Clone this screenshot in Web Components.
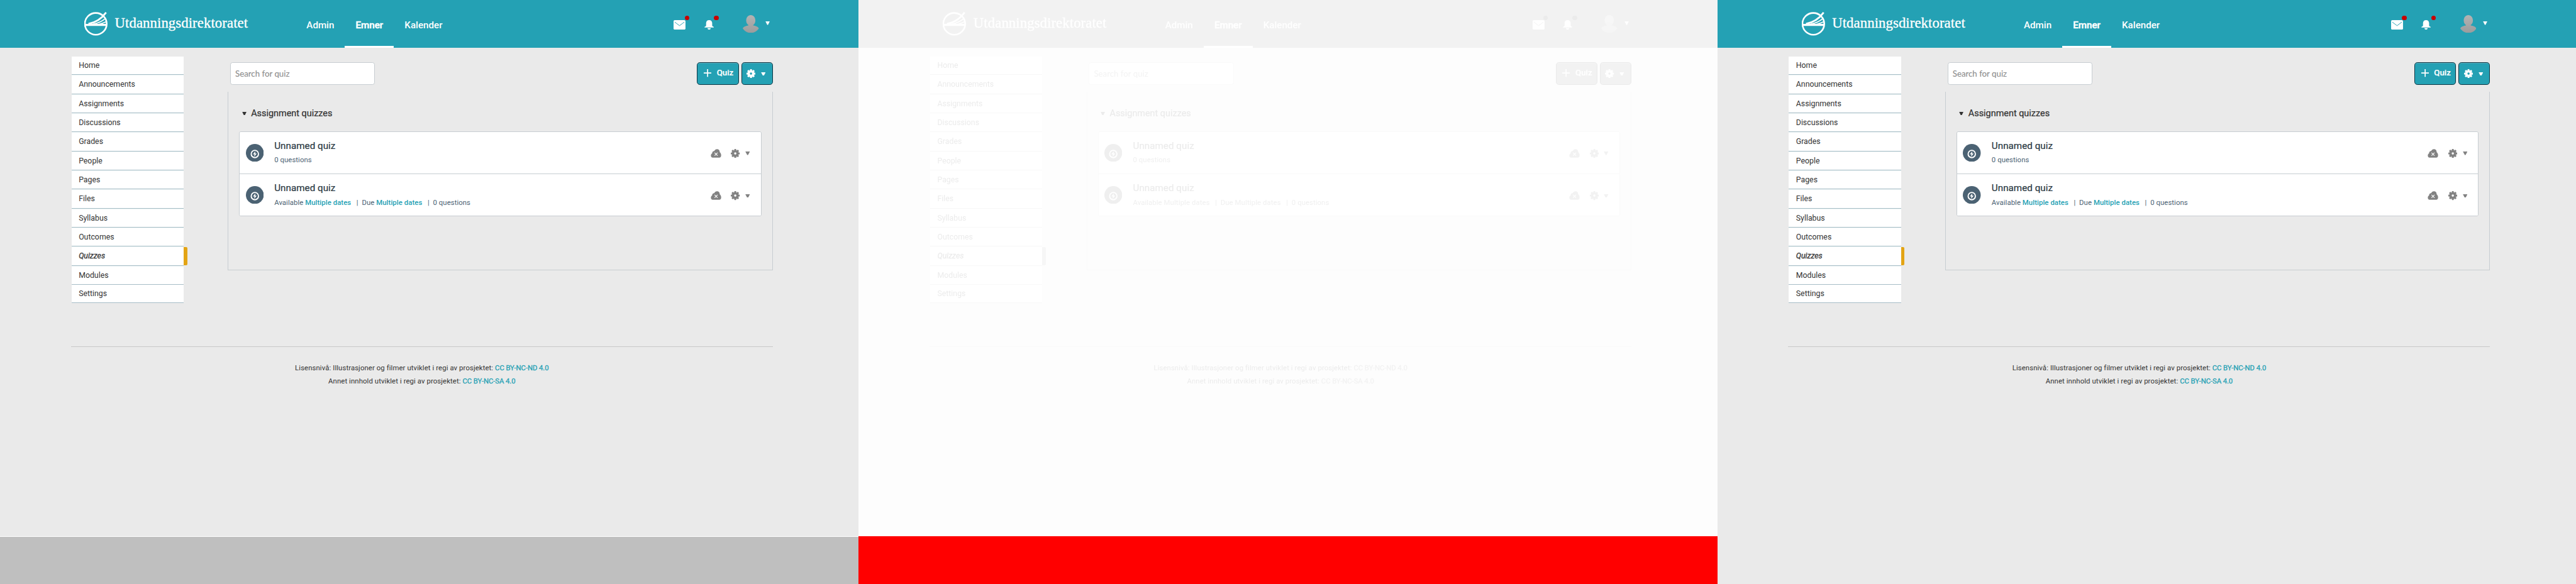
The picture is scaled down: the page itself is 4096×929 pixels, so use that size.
<!DOCTYPE html>
<html lang="nb">
<head>
<meta charset="utf-8">
<title>Utdanningsdirektoratet – Quizzes</title>
<style>
html,body{margin:0;padding:0;background:#eaeaea;overflow:hidden}
body{font-family:Roboto,sans-serif;width:4096px;height:929px}
</style>
</head>
<body>
<compare-view></compare-view>
<script>
const define = (name, html) => customElements.define(name, class extends HTMLElement {
  constructor() {
    super();
    const t = document.createElement('template');
    t.innerHTML = html;
    this.attachShadow({mode: 'open'}).append(t.content.cloneNode(true));
  }
});

/* Icons */
const teeth = Array.from({length: 8}, (_, i) => `<rect x="6" y="0" width="3.4" height="4" rx="1" transform="rotate(${i * 45} 7.5 7.5) translate(-.2 0)"/>`).join('');
define('icon-gear', `<style>:host{display:block;width:15px;height:15px}svg{display:block;width:100%;height:100%}</style>
<svg viewBox="0 0 15 15" fill="currentColor">${teeth}<path fill-rule="evenodd" d="M7.5 1.8a5.7 5.7 0 1 0 0 11.4a5.7 5.7 0 0 0 0-11.4zM7.5 5.6a1.9 1.9 0 1 1 0 3.8a1.9 1.9 0 0 1 0-3.8z"/></svg>`);
define('icon-caret', `<style>:host{display:block;width:8px;height:6px}svg{display:block;width:100%;height:100%}</style>
<svg viewBox="0 0 8 6" preserveAspectRatio="none" fill="currentColor"><path d="M.2 0h7.6L5 5.4Q4 6.5 3 5.4z"/></svg>`);
define('icon-cloud', `<style>:host{display:block;width:18px;height:15px}svg{display:block;width:100%;height:100%}</style>
<svg viewBox="0 0 18 15"><path fill="currentColor" d="M3.4 14.6C1.400 14.600 .4 13 .4 11.100C.4 9.200 1.300 7.900 2.500 7.300C2.300 4.900 4 3.400 6 3.400C7 1.300 8.700 .3 10.600 .3C13.500 .3 15.300 2.400 15.200 5.300C16.800 6.400 17.600 8.500 17.600 10.600C17.600 13 16.600 14.600 14.400 14.600z"/><path d="M6.600 6.200l5 5M11.600 6.200l-5 5" stroke="#fff" stroke-width="1.200"/></svg>`);
define('icon-quiz', `<style>:host{display:block;width:30px;height:30px}svg{display:block;width:100%;height:100%}</style>
<svg viewBox="0 0 30 30"><circle cx="15" cy="15" r="15" fill="#4b6273"/><circle cx="15" cy="16.800" r="6.100" fill="none" stroke="#fff" stroke-width="2"/><path fill="#fff" d="M16 12.200l-4.200 5.200h2.600l-.5 4l4.300-5.400h-2.700z"/></svg>`);

/* Header */
define('site-logo', `<style>
:host{display:flex;align-items:center;height:80px;gap:12px;color:#fff}
svg{display:block;width:39px;height:42px;flex:none}
span{font:24px/30px "Liberation Serif",serif;letter-spacing:.09px;white-space:nowrap;padding-bottom:1.500px;-webkit-text-stroke:.35px #fff}
</style>
<svg viewBox="0 0 39 42" fill="none" stroke="#fff"><circle cx="19.300" cy="21" r="18.300" stroke-width="2.800"/>
<path stroke-width="3.200" d="M1.500 22.800H37.500"/><path stroke-width="3" d="M36.600 2C30 11 22 18.500 7 21"/><path stroke-width="1.800" d="M36 11.500C30 17 24 20 14 21.800M37 17.500C32 19.800 29 21 24 22"/></svg><span><slot></slot></span>`);
define('nav-link', `<style>
:host{display:flex;box-sizing:border-box;height:80px;padding:0 18px;border-bottom:4px solid transparent;align-items:center;font:500 16px/20px Roboto,sans-serif;color:#fff}
:host([active]){border-color:#fff;-webkit-text-stroke:.5px #fff}
span{padding-top:8px}
</style><span><slot></slot></span>`);
define('notice-icon', `<style>
:host{display:block;position:relative;height:16px}
i{position:absolute;top:-8px;right:var(--dot,-6px);width:8px;height:8px;border-radius:50%;background:#c80000}
</style><slot></slot><i></i>`);
define('site-header', `<style>
:host{display:flex;box-sizing:border-box;height:80px;padding-left:141.500px;padding-right:148.500px;background:#24a1b4;color:#fff}
site-logo{width:354.500px;flex:none}
nav{display:flex;flex:1}
.tools{display:flex;height:80px}
svg{display:block}
notice-icon{margin-top:34px}
.mail{width:20px;margin-right:31px;--dot:-6px}
.bell{width:16px;margin-right:48.500px;--dot:-8px}
.avatar{margin:25px 11.500px 0 0}
icon-caret{margin-top:36px;height:6px;width:7.500px}
</style>
<site-logo>Utdanningsdirektoratet</site-logo>
<nav><nav-link>Admin</nav-link><nav-link active>Emner</nav-link><nav-link>Kalender</nav-link></nav>
<div class="tools">
<notice-icon class="mail"><svg width="20" height="16" viewBox="0 0 20 16"><rect width="20" height="16" rx="2" fill="#fff"/><path d="M2 3.300L10 9.300L18 3.300" fill="none" stroke="#24a1b4" stroke-width="1"/></svg></notice-icon>
<notice-icon class="bell"><svg width="16" height="16" viewBox="0 0 16 16" fill="#fff"><path d="M8 0C4.800 0 2.900 2.200 2.900 5V9C2.900 10.400 1.500 10.800 .3 11.300V12.300H15.700V11.300C14.500 10.800 13.100 10.400 13.100 9V5C13.100 2.200 11.200 0 8 0zM5.200 13.500H10.800C10.400 15.200 9.400 16 8 16S5.600 15.200 5.200 13.500z"/></svg></notice-icon>
<svg class="avatar" width="27" height="30" viewBox="0 0 27 30"><defs><linearGradient id="g" x2="0" y2="1"><stop stop-color="#b3b3b3"/><stop offset="1" stop-color="#9c9c9c"/></linearGradient></defs><path fill="url(#g)" d="M13.500 0C18 0 21.200 4 21.200 9.300C21.200 13 19.500 15.600 17.300 17C18 18.400 25 18 27 22.500C24 27 19 30 13.500 30S3 27 0 22.500C2 18 9 18.400 9.700 17C7.500 15.600 5.800 13 5.800 9.300C5.800 4 9 0 13.500 0z"/></svg>
<icon-caret></icon-caret>
</div>`);

/* Course navigation */
define('side-item', `<style>
:host{display:block;position:relative;box-sizing:border-box;height:31px;margin-bottom:1px;padding-left:12px;background:#fff;border-bottom:1px solid #a6bdc6;box-shadow:0 1px #eff6f7;font:13px/31px Roboto,sans-serif;color:#333}
:host([active]){font-style:italic;-webkit-text-stroke:.3px #333}
:host([active])::after{content:"";position:absolute;left:100%;top:0;width:6px;height:30px;border-radius:0 2px 2px 0;background:#e3a414}
:host([tight]){margin-bottom:0;box-shadow:none}
</style><slot></slot>`);
define('side-nav', `<style>:host{display:block;width:188px}</style>
<side-item>Home</side-item><side-item>Announcements</side-item><side-item>Assignments</side-item><side-item>Discussions</side-item><side-item>Grades</side-item><side-item>People</side-item><side-item>Pages</side-item><side-item>Files</side-item><side-item>Syllabus</side-item><side-item>Outcomes</side-item><side-item active>Quizzes</side-item><side-item tight>Modules</side-item><side-item tight>Settings</side-item>`);

/* Content */
define('tool-button', `<style>
:host{display:flex;align-items:center;box-sizing:border-box;height:38px;border:1px solid #0b3442;border-radius:5px;background:#24a1b4;box-shadow:inset 0 1px #55aebd;color:#fff;font:500 14px/20px Roboto,sans-serif;-webkit-text-stroke:.2px #fff}
</style><slot></slot>`);
define('quiz-row', `<style>
:host{display:flex;box-sizing:border-box;height:71px;padding:0 18px 0 10px;border-bottom:1px solid #c7cdd1;background:#fff}
:host(:last-of-type){border-bottom:0;height:70px}
icon-quiz{margin:20px 18px 0 0}
.text{flex:1}
.title{margin-top:11.700px;font:16px/24px Roboto,sans-serif;color:#2d3b45;-webkit-text-stroke:.25px #2d3b45;letter-spacing:.05px}
.sub{margin-top:4.300px;font:12px/16px Roboto,sans-serif;letter-spacing:.06px;color:#4b6273;white-space:pre}
.tools{display:flex;color:#828282}
icon-cloud{margin:29px 16.500px 0 0}
icon-gear{margin:29px 9px 0 0}
icon-caret{margin-top:33.500px}
</style>
<icon-quiz></icon-quiz><div class="text"><div class="title"><slot></slot></div><div class="sub"><slot name="sub"></slot></div></div>
<div class="tools"><icon-cloud></icon-cloud><icon-gear></icon-gear><icon-caret></icon-caret></div>`);
define('quiz-content', `<style>
:host{display:block;width:914px}
.bar{display:flex;height:38px;padding:9px 0 12px 4px}
.search{box-sizing:border-box;width:243px;height:38px;border:1px solid #c7cdd1;border-radius:4px;background:#fff;padding-left:7.500px;font:14px/36px Lato,sans-serif;color:#8e8e8e;-webkit-text-stroke:.15px #8e8e8e;margin-right:auto}
.add{width:70px;margin-right:4px;padding-left:10px;gap:9px;box-sizing:border-box}
.set{width:53px;padding-left:8px;gap:9px;box-sizing:border-box}
.set icon-gear{margin-top:1px}
.set icon-caret{margin-top:2px}
.panel{box-sizing:border-box;height:300px;border:1px solid #c7cdd1;border-top:0;padding:0 18px}
.head{display:flex;align-items:center;height:66px;padding:0 0 0 4.500px;box-sizing:border-box;gap:8px;font:15.200px/20px Roboto,sans-serif;color:#333;-webkit-text-stroke:.25px #333}
.head icon-caret{width:7.500px;margin-top:7px}
.head span{padding-top:8px}
.card{border:1px solid #c7cdd1;border-radius:3px;overflow:hidden;margin-top:0}
b{font-weight:500;color:#24a1b4}
</style>
<div class="bar"><div class="search">Search for quiz</div>
<tool-button class="add"><svg width="13" height="13" viewBox="0 0 13 13" stroke="#fff" stroke-width="1.800"><path d="M0 6.500h13M6.500 0v13"/></svg><span>Quiz</span></tool-button>
<tool-button class="set"><icon-gear></icon-gear><icon-caret></icon-caret></tool-button></div>
<div class="panel"><div class="head"><icon-caret></icon-caret><span>Assignment quizzes</span></div>
<div class="card"><quiz-row>Unnamed quiz<span slot="sub">0 questions</span></quiz-row><quiz-row>Unnamed quiz<span slot="sub">Available <b>Multiple dates</b>   |  Due <b>Multiple dates</b>   |  0 questions</span></quiz-row></div></div>`);

define('site-footer', `<style>
:host{display:block;margin-left:119px;width:1177px;border-top:1px solid #c8c8c8;padding-top:24.500px;box-sizing:border-box;text-align:center;font:12px/22px Roboto,sans-serif;color:#333;letter-spacing:.09px}
p{margin:0}p:first-child{padding-right:2.500px}
a{color:#24a1b4;-webkit-text-stroke:.3px #24a1b4;letter-spacing:-.1px}
</style>
<p>Lisensnivå: Illustrasjoner og filmer utviklet i regi av prosjektet: <a>CC BY-NC-ND 4.0</a></p>
<p>Annet innhold utviklet i regi av prosjektet: <a>CC BY-NC-SA 4.0</a></p>`);

define('quiz-page', `<style>
:host{display:block;width:1440px;height:900px;background:#eaeaea;overflow:hidden}
main{display:flex;height:501px;padding-left:120px;box-sizing:border-box}
side-nav{margin:15px 74px 0 0}
quiz-content{margin-top:15px}
</style>
<site-header></site-header><main><side-nav></side-nav><quiz-content></quiz-content></main><site-footer></site-footer>`);

define('compare-view', `<style>
:host{display:grid;grid-template-columns:repeat(3,1440px);grid-template-rows:900px 80px;width:4320px;height:980px;zoom:.948148}
.faded{filter:url(#fade)}
.missing{box-sizing:border-box;background:#bfbfbf;border-top:1px solid #fff}
.changed{background:#f00}
.rest{background:#eaeaea}
svg{position:absolute;width:0;height:0}
</style>
<quiz-page></quiz-page><quiz-page class="faded"></quiz-page><quiz-page></quiz-page>
<div class="missing"></div><div class="changed"></div><div class="rest"></div>
<svg><filter id="fade" x="0" y="0" width="1" height="1" color-interpolation-filters="sRGB"><feColorMatrix values=".0299 .0587 .0114 0 .9 .0299 .0587 .0114 0 .9 .0299 .0587 .0114 0 .9 0 0 0 1 0"/></filter></svg>`);
</script>
</body>
</html>
